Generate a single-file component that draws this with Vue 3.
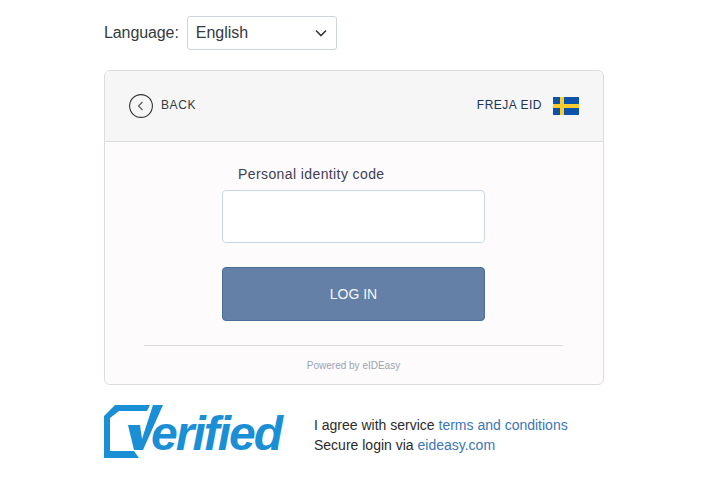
<script setup>
import { ref } from 'vue';

const language = ref('English');
const languages = ['English', 'Svenska', 'Eesti'];
const code = ref('');
</script>

<template>
  <div class="page">
    <div class="lang-row">
      <label class="lang-label">Language:</label>
      <div class="lang-select-wrap">
        <select class="lang-select" v-model="language">
          <option v-for="l in languages" :key="l">{{ l }}</option>
        </select>
        <svg class="caret" width="12" height="8" viewBox="0 0 12 8">
          <path d="M1 1.5 L6 6.5 L11 1.5" fill="none" stroke="#343a40" stroke-width="1.6" />
        </svg>
      </div>
    </div>

    <div class="card">
      <div class="card-head">
        <a class="back">
          <svg width="24" height="24" viewBox="0 0 24 24">
            <circle cx="12" cy="12" r="11.4" fill="none" stroke="#333" stroke-width="1.1" />
            <path d="M13.5 8 L9.5 12 L13.5 16" fill="none" stroke="#555" stroke-width="1.1" />
          </svg>
          <span>BACK</span>
        </a>
        <div class="method">
          <span>FREJA EID</span>
          <svg width="26" height="18" viewBox="0 0 26 18">
            <rect width="26" height="18" fill="#0b53a8" />
            <rect x="7" width="4" height="18" fill="#fecb2e" />
            <rect y="7" width="26" height="4" fill="#fecb2e" />
          </svg>
        </div>
      </div>

      <div class="card-body">
        <form class="login-form" @submit.prevent>
          <label class="code-label">Personal identity code</label>
          <input class="code-input" type="text" v-model="code" />
          <button class="login-btn" type="submit">LOG IN</button>
        </form>
        <div class="powered">Powered by eIDEasy</div>
      </div>
    </div>

    <div class="foot">
      <svg class="logo" width="182" height="56" viewBox="0 0 182 56">
        <path d="M0 11 L11 0 L46 0 L43 6 L15 6 L6 13 L6 46 L30 46 L35 53 L0 53 Z" fill="#1a8fd6" />
        <path d="M24 20 L36 20 L38 34 L49 0 L59 0 L39 45 L30 45 Z" fill="#1a8fd6" />
        <text x="47" y="45" class="logo-text">erified</text>
      </svg>
      <div class="terms">
        <div>I agree with service <a>terms and conditions</a></div>
        <div>Secure login via <a>eideasy.com</a></div>
      </div>
    </div>
  </div>
</template>

<style scoped>
.page {
  width: 500px;
  margin-left: 104px;
  padding-top: 16px;
  font-family: "Liberation Sans", Arial, sans-serif;
}

.lang-row {
  display: flex;
  align-items: center;
  gap: 8px;
  height: 34px;
}

.lang-label {
  font-size: 16px;
  letter-spacing: -0.1px;
  color: #343a40;
}

.lang-select-wrap {
  position: relative;
  width: 150px;
  height: 34px;
}

.lang-select {
  appearance: none;
  width: 100%;
  height: 100%;
  padding: 0 8px 2px;
  border: 1px solid #ced4da;
  border-radius: 3px;
  background: #fff;
  font-family: inherit;
  font-size: 16px;
  color: #343a40;
}

.caret {
  position: absolute;
  right: 10px;
  top: 13px;
  pointer-events: none;
}

.card {
  margin-top: 20px;
  height: 315px;
  box-sizing: border-box;
  border: 1px solid #dcdcdc;
  border-radius: 6px;
  background: #fdfbfc;
  overflow: hidden;
}

.card-head {
  display: flex;
  align-items: center;
  justify-content: space-between;
  height: 71px;
  box-sizing: border-box;
  padding: 0 24px;
  background: #f6f6f6;
  border-bottom: 1px solid #dcdcdc;
}

.back {
  display: flex;
  align-items: center;
  gap: 8px;
  font-size: 12px;
  letter-spacing: 0.6px;
  color: #343a40;
}

.method {
  display: flex;
  align-items: center;
  gap: 11px;
  font-size: 12px;
  letter-spacing: 0.5px;
  color: #1d3557;
}

.back span,
.method span {
  padding-bottom: 2px;
}

.card-body {
  padding-top: 24px;
}

.login-form {
  display: flex;
  flex-direction: column;
  width: 263px;
  margin: 0 auto 0 117px;
}

.code-label {
  padding-left: 16px;
  font-size: 14px;
  line-height: 16px;
  letter-spacing: 0.4px;
  color: #3f3f50;
}

.code-input {
  box-sizing: border-box;
  height: 53px;
  margin-top: 8px;
  border: 1px solid #c9d6e6;
  border-radius: 4px;
  background: #fff;
}

.login-btn {
  height: 54px;
  margin-top: 24px;
  border: 1px solid #4a6d96;
  border-radius: 4px;
  background: #6580a6;
  color: #f4f7fb;
  font-family: inherit;
  font-size: 14px;
}

.powered {
  margin: 24px 40px 0 39px;
  padding-top: 14px;
  border-top: 1px solid #dcdcdc;
  text-align: center;
  font-size: 10px;
  line-height: 11px;
  color: #9aa3b2;
}

.foot {
  display: flex;
  align-items: flex-start;
  margin-top: 20px;
}

.logo {
  flex: none;
}

.logo-text {
  font-family: "Liberation Sans", Arial, sans-serif;
  font-size: 48px;
  font-weight: 700;
  font-style: italic;
  letter-spacing: -2px;
  fill: #1a8fd6;
}

.terms {
  margin-left: 28px;
  padding-top: 10px;
  font-size: 14px;
  line-height: 20px;
  color: #2b2b2b;
}

.terms a {
  color: #3a76b8;
}
</style>

<style>
body {
  background: #fff;
}
</style>
